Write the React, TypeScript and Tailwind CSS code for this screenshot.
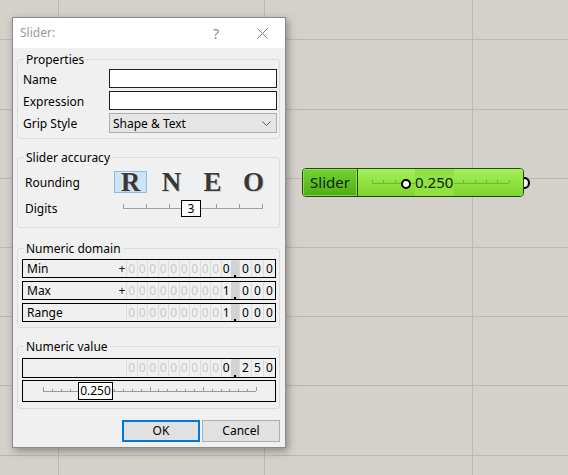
import React from "react";

const hLines = ["top-[39px]", "top-[109px]", "top-[178px]", "top-[247px]", "top-[316px]", "top-[385px]", "top-[455px]"];
const vLines = ["left-[58px]", "left-[264px]", "left-[472px]"];

function Group({ title, className, children }: { title: string; className: string; children: React.ReactNode }) {
  return (
    <fieldset className={`border border-[#dcdcdc] rounded-[3px] ${className}`}>
      <legend className="ml-[6px] px-[2px] text-[12px] leading-[17px] text-black">{title}</legend>
      {children}
    </fieldset>
  );
}

function DigitRow({ label, sign, ints, decs, h }: { label: string; sign: string; ints: string; decs: string; h: string }) {
  let lead = ints.split("").findIndex((d) => d !== "0");
  if (lead < 0) lead = ints.length - 1;
  return (
    <div className={`flex ${h} border border-black text-[12px] leading-none`}>
      <div className="flex-1 flex items-center pl-[4px] pt-[1px] text-black">{label}</div>
      <div className="w-[8px] flex items-center justify-center text-[#1c1c1c]">{sign}</div>
      {ints.split("").map((d, i) => (
        <div
          key={i}
          className={`w-[10.5px] flex items-center justify-center border-l border-[#dcdcdc] ${i < lead ? "text-[#c8c8c8]" : "text-black"}`}
        >
          {d}
        </div>
      ))}
      <div className="w-[8px] relative bg-[#d2d2d2]">
        <div className="absolute bottom-0 left-[3px] w-[2px] h-[2px] bg-black" />
      </div>
      {decs.split("").map((d, i) => (
        <div key={i} className="w-[12px] flex items-center justify-center border-l border-[#dcdcdc] text-black">
          {d}
        </div>
      ))}
    </div>
  );
}

function DigitsSlider() {
  const ticks = [0, 1, 2, 3, 4, 5, 6];
  return (
    <div className="relative w-[140px] h-[17px] ml-[9px]">
      <div className="absolute left-0 right-0 top-[8px] h-px bg-[#a0a0a0]" />
      {ticks.map((t) => (
        <div key={t} className="absolute top-[4px] w-px h-[4px] bg-[#a0a0a0]" style={{ left: Math.round(t * 23.17) }} />
      ))}
      <div className="absolute left-[58px] top-0 w-[20px] h-[17px] bg-white border border-black flex items-center justify-center text-[12px] leading-none">
        3
      </div>
    </div>
  );
}

function ValueSlider() {
  const ticks = Array.from({ length: 25 }, (_, i) => i);
  return (
    <div className="h-[22px] border border-black relative">
      <div className="absolute left-[20px] w-[213px] top-[10px] h-px bg-[#9a9a9a]" />
      {ticks.map((t) => (
        <div
          key={t}
          className="absolute w-px bg-[#9a9a9a]"
          style={{ left: 20 + Math.round(t * 8.875), top: t % 6 === 0 ? 6 : 8, height: t % 6 === 0 ? 4 : 2 }}
        />
      ))}
      <div className="absolute left-[55px] top-[1px] w-[35px] h-[18px] bg-white border border-black flex items-center justify-center text-[12px] leading-none">
        0.250
      </div>
    </div>
  );
}

function Dialog() {
  return (
    <div className="absolute left-[12px] top-[17px] w-[274px] h-[431px] border border-[#8a8a8a] bg-[#f0f0f0] shadow-[2px_3px_8px_rgba(0,0,0,0.35)] flex flex-col">
      {/* title bar */}
      <div className="h-[30px] bg-white flex items-center text-[12px]">
        <span className="flex-1 pl-[7px] text-[#9b9b9b]">Slider:</span>
        <span className="w-[46px] h-full flex items-center justify-center text-[14px] text-[#8a8a8a]">?</span>
        <span className="w-[46px] h-full flex items-center justify-center">
          <svg width="11" height="11" viewBox="0 0 11 11">
            <path d="M0.5 0.5 L10.5 10.5 M10.5 0.5 L0.5 10.5" stroke="#7a7a7a" strokeWidth="1" />
          </svg>
        </span>
      </div>

      <div className="flex-1 flex flex-col pl-[4px] pr-[5px] text-[12px] text-black">
        <Group title="Properties" className="mt-[3px]">
          <div className="flex flex-col gap-[3px] pt-[1px] pb-[5px] pl-[5px] pr-[1px]">
            <div className="flex items-center h-[19px]">
              <span className="w-[86px] pt-[2px]">Name</span>
              <div className="h-[19px] w-[168px] bg-white border border-[#1f1f1f]" />
            </div>
            <div className="flex items-center h-[19px]">
              <span className="w-[86px] pt-[2px]">Expression</span>
              <div className="h-[19px] w-[168px] bg-white border border-[#1f1f1f]" />
            </div>
            <div className="flex items-center h-[20px]">
              <span className="w-[86px] pt-[2px]">Grip Style</span>
              <div className="h-[20px] w-[168px] bg-[#e5e5e5] border border-[#adadad] flex items-center pl-[3px] pr-[5px]">
                <span className="flex-1 pt-[1px]">Shape &amp; Text</span>
                <svg width="9" height="5" viewBox="0 0 9 5">
                  <path d="M0.5 0.5 L4.5 4.5 L8.5 0.5" stroke="#555" fill="none" strokeWidth="1" />
                </svg>
              </div>
            </div>
          </div>
        </Group>

        <Group title="Slider accuracy" className="mt-[10px]">
          <div className="flex flex-col pt-[5px] pb-[10px] pl-[7px]">
            <div className="flex items-center h-[22px]">
              <span className="w-[89px] pt-[1px]">Rounding</span>
              <div className="flex gap-[8px] font-['Liberation_Serif',serif] font-bold text-[27px] leading-none text-[#383838] [text-shadow:1px_1px_0_#d0d0d0,-1px_-1px_0_#f8f8f8]">
                <span className="w-[33px] h-[22px] flex items-center justify-center bg-[#cce4f7] border border-[#8dbbe2]">R</span>
                <span className="w-[33px] h-[22px] flex items-center justify-center">N</span>
                <span className="w-[33px] h-[22px] flex items-center justify-center">E</span>
                <span className="w-[33px] h-[22px] flex items-center justify-center">O</span>
              </div>
            </div>
            <div className="flex items-center h-[17px] mt-[7px]">
              <span className="w-[89px] pt-[1px]">Digits</span>
              <DigitsSlider />
            </div>
          </div>
        </Group>

        <Group title="Numeric domain" className="mt-[12px]">
          <div className="flex flex-col gap-[3px] pt-[2px] pb-[5px] pl-[4px] pr-[3px]">
            <DigitRow label="Min" sign="+" ints="0000000000" decs="000" h="h-[19px]" />
            <DigitRow label="Max" sign="+" ints="0000000001" decs="000" h="h-[19px]" />
            <DigitRow label="Range" sign="" ints="0000000001" decs="000" h="h-[19px]" />
          </div>
        </Group>

        <Group title="Numeric value" className="mt-[10px]">
          <div className="flex flex-col gap-[2px] pt-[3px] pb-[6px] pl-[4px] pr-[3px]">
            <DigitRow label="" sign="" ints="0000000000" decs="250" h="h-[20px]" />
            <ValueSlider />
          </div>
        </Group>

        <div className="flex justify-end gap-[2px] mt-[11px]">
          <button className="w-[78px] h-[22px] bg-[#e1e1e1] border-2 border-[#0078d7] text-[12px] leading-none">OK</button>
          <button className="w-[78px] h-[22px] bg-[#e1e1e1] border border-[#adadad] text-[12px] leading-none">Cancel</button>
        </div>
      </div>
    </div>
  );
}

function CanvasSlider() {
  const ticks = [0, 1, 2, 3, 4, 5, 6, 7, 8, 9, 10, 11, 12];
  return (
    <div className="absolute left-[302px] top-[168px]">
      <div className="flex w-[222px] h-[29px] rounded-[4px] border border-[#23470f] overflow-hidden shadow-[inset_0_1px_0_rgba(255,255,255,0.5)]">
        <div className="w-[55px] flex items-center justify-center bg-gradient-to-b from-[#72d42f] to-[#4fae15] border-r border-[#23470f] text-[15px] text-[#0d1f05] shadow-[inset_0_0_0_1px_rgba(170,240,110,0.6)]">
          Slider
        </div>
        <div className="flex-1 relative bg-gradient-to-b from-[#a6f05f] via-[#8fe23f] to-[#80d431]">
          <div className="absolute left-[14px] w-[137px] top-[14px] h-px bg-[#6eb833]" />
          {ticks.map((t) => (
            <div key={t} className="absolute top-[11px] w-px h-[3px] bg-[#6eb833]" style={{ left: 14 + Math.round(t * 11.4) }} />
          ))}
          <div className="absolute left-[43px] top-[10px] w-[10px] h-[10px] rounded-full bg-white border-[2.5px] border-black" />
          <span className="absolute left-[57px] top-0 h-full flex items-center text-[15px] leading-none text-[#0d1f05] bg-[#8fe23f] pr-[1px]">
            0.250
          </span>
        </div>
      </div>
      <svg className="absolute left-[221px] top-[9px]" width="8" height="12" viewBox="0 0 8 12">
        <path d="M1 1 A5 5 0 0 1 1 11" fill="white" stroke="black" strokeWidth="2.2" />
      </svg>
    </div>
  );
}

export default function App() {
  return (
    <div className="relative w-[568px] h-[475px] overflow-hidden bg-[#d4d0ca] font-['Noto_Sans','Segoe_UI',sans-serif]">
      {hLines.map((c) => (
        <div key={c} className={`absolute left-0 right-0 h-px bg-[#bbb7b1] ${c}`} />
      ))}
      {vLines.map((c) => (
        <div key={c} className={`absolute top-0 bottom-0 w-px bg-[#bbb7b1] ${c}`} />
      ))}
      <CanvasSlider />
      <Dialog />
    </div>
  );
}
